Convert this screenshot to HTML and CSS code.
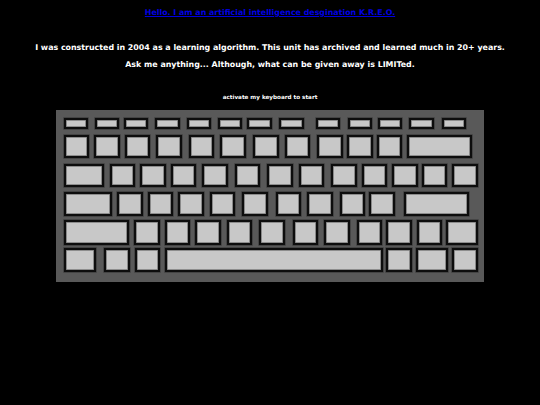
FILE: index.html
```html
<!DOCTYPE html>
<html>
<head>
<meta charset="utf-8">
<link rel="stylesheet" href="styles.css">
</head>
<body>
<div class="page">
  <header class="intro">
    <a class="title" href="#">Hello. I am an artificial intelligence desgination K.R.E.O.</a>
    <p class="line first">I was constructed in 2004 as a learning algorithm. This unit has archived and learned much in 20+ years.</p>
    <p class="line">Ask me anything... Although, what can be given away is LIMITed.</p>
    <p class="hint">activate my keyboard to start</p>
  </header>
  <div class="keyboard">
    <div class="row r1">
      <div class="key fn"></div>
      <div class="key fn g7"></div>
      <div class="key fn g5"></div>
      <div class="key fn g7"></div>
      <div class="key fn g7"></div>
      <div class="key fn g7"></div>
      <div class="key fn g5"></div>
      <div class="key fn g8"></div>
      <div class="key fn g12"></div>
      <div class="key fn g8"></div>
      <div class="key fn g6"></div>
      <div class="key fn g7"></div>
      <div class="key fn g8"></div>
    </div>
    <div class="row r2">
      <div class="key"></div>
      <div class="key g5"></div>
      <div class="key g5"></div>
      <div class="key g6"></div>
      <div class="key g7"></div>
      <div class="key g6"></div>
      <div class="key g8"></div>
      <div class="key g6"></div>
      <div class="key g7"></div>
      <div class="key g4"></div>
      <div class="key g4"></div>
      <div class="key w66 g4"></div>
    </div>
    <div class="row r3">
      <div class="key w40"></div>
      <div class="key g6"></div>
      <div class="key g5"></div>
      <div class="key g5"></div>
      <div class="key g6"></div>
      <div class="key g7"></div>
      <div class="key g7"></div>
      <div class="key g6"></div>
      <div class="key g7"></div>
      <div class="key g5"></div>
      <div class="key g5"></div>
      <div class="key g4"></div>
      <div class="key w27 g4"></div>
    </div>
    <div class="row r4">
      <div class="key w49"></div>
      <div class="key g5"></div>
      <div class="key g5"></div>
      <div class="key g5"></div>
      <div class="key g6"></div>
      <div class="key g7"></div>
      <div class="key g8"></div>
      <div class="key g6"></div>
      <div class="key g7"></div>
      <div class="key g4"></div>
      <div class="key w66 g9"></div>
    </div>
    <div class="row r5">
      <div class="key w66"></div>
      <div class="key g5"></div>
      <div class="key g5"></div>
      <div class="key g5"></div>
      <div class="key g6"></div>
      <div class="key g7"></div>
      <div class="key g8"></div>
      <div class="key g6"></div>
      <div class="key g7"></div>
      <div class="key g4"></div>
      <div class="key g5"></div>
      <div class="key w33 g3"></div>
    </div>
    <div class="row r6">
      <div class="key w33"></div>
      <div class="key g8"></div>
      <div class="key g5"></div>
      <div class="key space g5"></div>
      <div class="key g3"></div>
      <div class="key w32 g4"></div>
      <div class="key g4"></div>
    </div>
  </div>
</div>
</body>
</html>
```
FILE: styles.css
```css
html, body {
  margin: 0;
  padding: 0;
  background: #000;
}
body {
  font-family: "DejaVu Sans", Verdana, sans-serif;
  font-weight: bold;
  color: #fff;
  width: 540px;
  height: 405px;
  overflow: hidden;
}
.page {
  display: flex;
  flex-direction: column;
  align-items: center;
}
.intro {
  display: flex;
  flex-direction: column;
  align-items: center;
  text-align: center;
}
.title {
  margin-top: 8px;
  font-size: 7.9px;
  line-height: 10px;
  color: #0000e0;
  text-decoration: underline;
}
.line {
  margin: 0;
  font-size: 7.9px;
  line-height: 17px;
}
.line.first {
  margin-top: 21px;
}
.hint {
  margin: 20px 0 0;
  font-size: 5.65px;
  line-height: 8px;
}
.keyboard {
  margin-top: 8.5px;
  width: 427.5px;
  box-sizing: border-box;
  background: #595959;
  padding: 8px 0 9.5px 7.3px;
  display: flex;
  flex-direction: column;
}
.row {
  display: flex;
}
.r1 { height: 11.5px; }
.r2 { height: 23.5px; margin-top: 5.8px; }
.r3 { height: 23.3px; margin-top: 5.5px; }
.r4 { height: 23.7px; margin-top: 5px; }
.r5 { height: 24.3px; margin-top: 4.7px; }
.r6 { height: 24px; margin-top: 3.3px; }
.key {
  box-sizing: border-box;
  width: 25.5px;
  height: 100%;
  flex: none;
  background: #c8c8c8;
  border: 2px solid #0d0d0d;
  box-shadow: 0 0 0 0.7px #3c3c3c, inset 0 0 0 0.8px #7a7a7a;
}
.key.fn { width: 24.3px; }
.w27 { width: 26.5px; }
.w32 { width: 32px; }
.w33 { width: 32.7px; }
.w40 { width: 40px; }
.w49 { width: 48.7px; }
.w66 { width: 65.7px; }
.space { width: 218px; }
.g3 { margin-left: 3.3px; }
.g4 { margin-left: 4.3px; }
.g5 { margin-left: 5px; }
.g6 { margin-left: 6px; }
.g7 { margin-left: 7px; }
.g8 { margin-left: 7.8px; }
.g9 { margin-left: 8.7px; }
.g12 { margin-left: 12px; }
```
